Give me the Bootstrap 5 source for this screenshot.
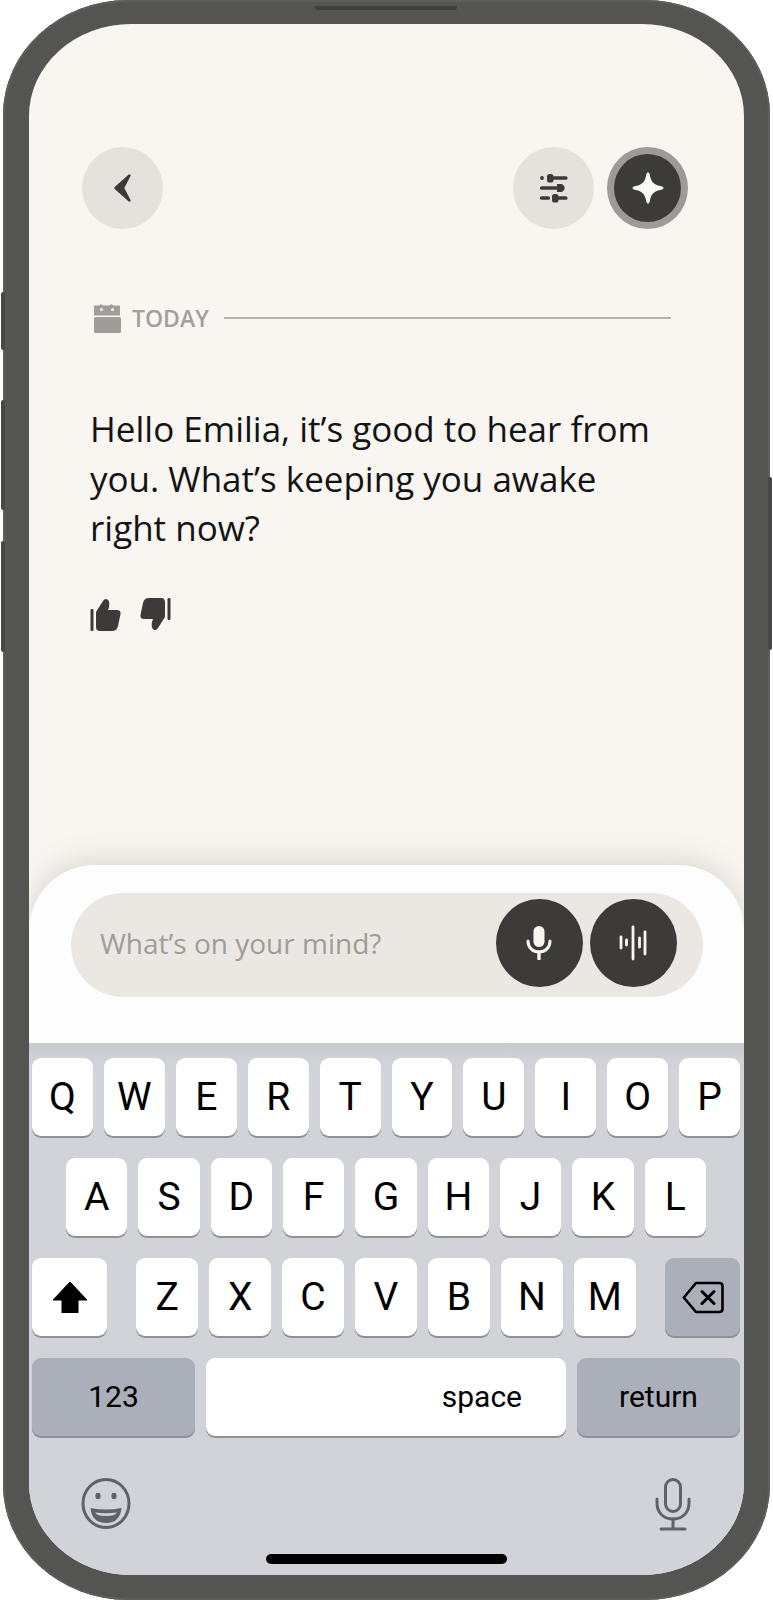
<!DOCTYPE html>
<html lang="en">
<head>
  <meta charset="UTF-8" />
  <meta name="viewport" content="width=device-width, initial-scale=1.0"/>
  <title>Chat</title>
  <link href="https://cdn.jsdelivr.net/npm/bootstrap@5.3.3/dist/css/bootstrap.min.css" rel="stylesheet">
  <style>
    body {
      margin: 0;
      background: #fff;
      font-family: "Open Sans", "Liberation Sans", sans-serif;
    }

    /* device shell */
    .phone-shell {
      position: relative;
      width: 767px;
      height: 1600px;
      margin-left: 3px;
      padding: 24px 26px 25px 26px;
      background: #545452;
      border-radius: 125px / 115px;
      box-shadow: inset 0 0 0 2px #5d5d5b;
    }
    .shell-notch {
      position: absolute;
      top: 6px;
      left: 312px;
      width: 142px;
      height: 4px;
      background: #3f3f3e;
      border-radius: 0 0 3px 3px;
    }
    .side-key {
      position: absolute;
      width: 4px;
      background: #474745;
      border-radius: 2px;
    }
    .side-key-a { left: -2px; top: 292px; height: 58px; }
    .side-key-b { left: -2px; top: 400px; height: 110px; }
    .side-key-c { left: -2px; top: 541px; height: 111px; }
    .side-key-d { right: -2px; top: 477px; height: 173px; }

    .phone-screen {
      height: 100%;
      background: #f9f6f1;
      border-radius: 102px / 92px;
      overflow: hidden;
    }

    /* conversation area */
    .chat-pane {
      height: 841px;
      padding: 123px 56px 0 53px;
      flex: none;
    }
    .round-btn {
      width: 81px;
      height: 82px;
      padding: 0;
      border: 0;
      background: #e5e2dd;
    }
    .round-btn-dark {
      background: #3d3a3a;
      border: 7px solid #9e9a97;
      background-clip: border-box;
    }
    .top-gap { gap: 13px; }
    .today-row {
      margin: 74px 17px 0 11px;
      gap: 11px;
    }
    .today-label {
      color: #a3a09c;
      font-size: 23px;
      font-weight: 600;
      line-height: 30px;
      font-family: "Open Sans", sans-serif;
    }
    .today-rule {
      height: 2px;
      margin-left: 4px;
      background: #b5b0ac;
    }
    .chat-message {
      margin: 71px 0 0 8px;
      font-size: 35px;
      line-height: 49.5px;
      color: #141414;
    }
    .rate-row {
      margin: 45px 0 0 8px;
      gap: 19px;
    }

    /* input sheet */
    .input-sheet {
      height: 178px;
      padding: 28px 41.5px 0 42px;
      background: #fdfdfd;
      border-radius: 66px 66px 0 0;
      box-shadow: 0 -6px 28px rgba(110, 100, 90, .2);
      position: relative;
      flex: none;
    }
    .input-pill {
      height: 104px;
      padding: 0 26px 0 29px;
      background: #ebe8e3;
      border-radius: 52px;
      gap: 7px;
    }
    .input-hint {
      color: #a09c99;
      font-size: 28px;
    }
    .pill-btn {
      width: 87px;
      height: 88px;
      padding: 0;
      border: 0;
      background: #3d3a3a;
    }

    /* keyboard */
    .kb-pane {
      position: relative;
      padding: 15px 4px 0 3px;
      background: linear-gradient(#c6c8cf, #d1d3d9 18px);
      font-family: "Roboto", "Liberation Sans", sans-serif;
      color: #000;
    }
    .kb-row {
      gap: 11px;
      height: 78px;
      margin-bottom: 22px;
    }
    .kb-row-mid { padding: 0 34px; }
    .kb-key {
      flex: 1 1 0;
      height: 78px;
      background: #fff;
      border-radius: 9px;
      box-shadow: 0 2px 0 #8f9199;
      font-size: 39px;
      line-height: 1;
    }
    .kb-key-fn { background: #abafba; }
    .kb-key-wide {
      flex: none;
      width: 75px;
    }
    .kb-key-word {
      font-size: 30px;
    }
    .kb-key-alt { flex: none; width: 163px; }
    .kb-space {
      padding-right: 44px;
    }
    .kb-letters {
      flex: 1 1 0;
      gap: 10.5px;
      margin: 0 18px;
    }
    .kb-extras {
      padding: 20px 49px 0 49px;
    }
    .kb-home {
      width: 241px;
      height: 10px;
      margin: 23px auto 0;
      background: #000;
      border-radius: 5px;
    }
  </style>
</head>
<body>

  <div class="phone-shell">
    <div class="shell-notch"></div>
    <div class="side-key side-key-a"></div>
    <div class="side-key side-key-b"></div>
    <div class="side-key side-key-c"></div>
    <div class="side-key side-key-d"></div>

    <div class="phone-screen d-flex flex-column">

      <div class="chat-pane">
        <div class="d-flex justify-content-between">
          <button class="btn round-btn rounded-circle d-flex align-items-center justify-content-center" aria-label="Back">
            <svg width="20" height="28" viewBox="0 0 20 28"><path d="M16.5 1.5 L2.5 14 L16.5 26.5 L10 14 Z" fill="#3d3a3a" stroke="#3d3a3a" stroke-width="2.4" stroke-linejoin="round"/></svg>
          </button>
          <div class="d-flex top-gap">
            <button class="btn round-btn rounded-circle d-flex align-items-center justify-content-center" aria-label="Filters">
              <svg width="28" height="30" viewBox="0 0 28 30" fill="#3d3a3a">
                <circle cx="2" cy="5" r="1.9"/>
                <rect x="7" y="1" width="6.5" height="8.5" rx="2.6"/>
                <rect x="12" y="3.2" width="15.5" height="3.6" rx="1.6"/>
                <rect x="0" y="13.2" width="18" height="3.6" rx="1.6"/>
                <path d="M17 11 h5 q5.5 4 0 8 h-5 z"/>
                <rect x="0" y="23.2" width="10" height="3.6" rx="1.6"/>
                <rect x="12" y="21" width="6.5" height="8.5" rx="2.6"/>
                <rect x="17" y="23.2" width="10.5" height="3.6" rx="1.6"/>
              </svg>
            </button>
            <button class="btn round-btn round-btn-dark rounded-circle d-flex align-items-center justify-content-center" aria-label="Assistant">
              <svg width="32" height="32" viewBox="0 0 32 32"><path d="M16 0.5 C17.3 0.5 17.6 2 18 4 C19.3 10 22 12.7 28 14 C30 14.4 31.5 14.7 31.5 16 C31.5 17.3 30 17.6 28 18 C22 19.3 19.3 22 18 28 C17.6 30 17.3 31.5 16 31.5 C14.7 31.5 14.4 30 14 28 C12.7 22 10 19.3 4 18 C2 17.6 0.5 17.3 0.5 16 C0.5 14.7 2 14.4 4 14 C10 12.7 12.7 10 14 4 C14.4 2 14.7 0.5 16 0.5 Z" fill="#fbf9f5"/></svg>
            </button>
          </div>
        </div>

        <div class="today-row d-flex align-items-center">
          <svg width="28" height="30" viewBox="0 0 28 30" fill="#a09c99">
            <path d="M1 3.5 q0-1 1-1 h4.5 q1-2.5 3.5 0 h6.5 q2.5-2.5 3.5 0 h6 q1 0 1 1 v9 h-26 z"/>
            <rect x="1" y="14" width="27" height="16" rx="1.5"/>
            <circle cx="8.5" cy="6.5" r="1.5" fill="#f9f6f1"/>
            <circle cx="19.5" cy="6.5" r="1.5" fill="#f9f6f1"/>
          </svg>
          <span class="today-label">TODAY</span>
          <div class="today-rule flex-grow-1"></div>
        </div>

        <p class="chat-message">Hello Emilia, it’s good to hear from<br>you. What’s keeping you awake<br>right now?</p>

        <div class="rate-row d-flex">
          <svg width="31" height="33" viewBox="0 0 31 33" fill="#3d3a3a">
            <rect x="0.5" y="11" width="3" height="22" rx="1.2"/>
            <path d="M6 14 L13 3 Q15 0 17.5 1.5 Q20 3 19 9 L18 12 H27 Q31 12 30.5 16 L28 28 Q27 33 22 33 H10 Q6 33 6 29 Z"/>
          </svg>
          <svg width="31" height="33" viewBox="0 0 31 33" fill="#3d3a3a">
            <g transform="rotate(180 15.5 16.5)">
              <rect x="0.5" y="11" width="3" height="22" rx="1.2"/>
              <path d="M6 14 L13 3 Q15 0 17.5 1.5 Q20 3 19 9 L18 12 H27 Q31 12 30.5 16 L28 28 Q27 33 22 33 H10 Q6 33 6 29 Z"/>
            </g>
          </svg>
        </div>
      </div>

      <div class="input-sheet">
        <div class="input-pill d-flex align-items-center">
          <span class="input-hint flex-grow-1 mb-1">What’s on your mind?</span>
          <button class="btn pill-btn rounded-circle d-flex align-items-center justify-content-center mb-1" aria-label="Dictate">
            <svg width="26" height="34" viewBox="0 0 26 34" fill="none">
              <rect x="7.5" y="0" width="11" height="21" rx="5.5" fill="#f9f6f1"/>
              <path d="M2 15 C2 22 7 26 13 26 C19 26 24 22 24 15" stroke="#f9f6f1" stroke-width="3" stroke-linecap="round"/>
              <path d="M13 26 V33" stroke="#f9f6f1" stroke-width="3.4" stroke-linecap="round"/>
            </svg>
          </button>
          <button class="btn pill-btn rounded-circle d-flex align-items-center justify-content-center mb-1" aria-label="Voice">
            <svg width="28" height="36" viewBox="0 0 28 36" fill="none" stroke="#f9f6f1" stroke-width="2.8" stroke-linecap="round">
              <path d="M2 12 V23"/>
              <path d="M7.5 15 V20"/>
              <path d="M14 2 V34"/>
              <path d="M20.5 13 V22"/>
              <path d="M26 7 V29"/>
            </svg>
          </button>
        </div>
      </div>

      <div class="kb-pane flex-grow-1">
        <div class="kb-row d-flex">
          <div class="kb-key d-flex align-items-center justify-content-center">Q</div>
          <div class="kb-key d-flex align-items-center justify-content-center">W</div>
          <div class="kb-key d-flex align-items-center justify-content-center">E</div>
          <div class="kb-key d-flex align-items-center justify-content-center">R</div>
          <div class="kb-key d-flex align-items-center justify-content-center">T</div>
          <div class="kb-key d-flex align-items-center justify-content-center">Y</div>
          <div class="kb-key d-flex align-items-center justify-content-center">U</div>
          <div class="kb-key d-flex align-items-center justify-content-center">I</div>
          <div class="kb-key d-flex align-items-center justify-content-center">O</div>
          <div class="kb-key d-flex align-items-center justify-content-center">P</div>
        </div>
        <div class="kb-row kb-row-mid d-flex">
          <div class="kb-key d-flex align-items-center justify-content-center">A</div>
          <div class="kb-key d-flex align-items-center justify-content-center">S</div>
          <div class="kb-key d-flex align-items-center justify-content-center">D</div>
          <div class="kb-key d-flex align-items-center justify-content-center">F</div>
          <div class="kb-key d-flex align-items-center justify-content-center">G</div>
          <div class="kb-key d-flex align-items-center justify-content-center">H</div>
          <div class="kb-key d-flex align-items-center justify-content-center">J</div>
          <div class="kb-key d-flex align-items-center justify-content-center">K</div>
          <div class="kb-key d-flex align-items-center justify-content-center">L</div>
        </div>
        <div class="kb-row d-flex">
          <div class="kb-key kb-key-wide d-flex align-items-center justify-content-center" aria-label="Shift">
            <svg width="36" height="31" viewBox="0 0 36 31"><path d="M18 0 L35 18 H26 V31 H10 V18 H1 Z" fill="#000" stroke="#000" stroke-linejoin="round"/></svg>
          </div>
          <div class="kb-letters d-flex">
            <div class="kb-key d-flex align-items-center justify-content-center">Z</div>
            <div class="kb-key d-flex align-items-center justify-content-center">X</div>
            <div class="kb-key d-flex align-items-center justify-content-center">C</div>
            <div class="kb-key d-flex align-items-center justify-content-center">V</div>
            <div class="kb-key d-flex align-items-center justify-content-center">B</div>
            <div class="kb-key d-flex align-items-center justify-content-center">N</div>
            <div class="kb-key d-flex align-items-center justify-content-center">M</div>
          </div>
          <div class="kb-key kb-key-fn kb-key-wide d-flex align-items-center justify-content-center" aria-label="Delete">
            <svg width="42" height="33" viewBox="0 0 42 33" fill="none" stroke="#000" stroke-width="2.6" stroke-linejoin="round" stroke-linecap="round">
              <path d="M14 2 H37 Q40.5 2 40.5 5 V28 Q40.5 31 37 31 H14 L1.8 16.5 Z"/>
              <path d="M20 10.5 L32 22.5 M32 10.5 L20 22.5" stroke-width="3"/>
            </svg>
          </div>
        </div>
        <div class="kb-row d-flex">
          <div class="kb-key kb-key-fn kb-key-word kb-key-alt d-flex align-items-center justify-content-center">123</div>
          <div class="kb-key kb-key-word kb-space d-flex align-items-center justify-content-end">space</div>
          <div class="kb-key kb-key-fn kb-key-word kb-key-alt d-flex align-items-center justify-content-center">return</div>
        </div>

        <div class="kb-extras d-flex justify-content-between align-items-start">
          <svg width="50" height="51" viewBox="0 0 50 51" fill="none" stroke="#5f6369" stroke-width="3">
            <ellipse cx="25" cy="25.5" rx="23" ry="24"/>
            <ellipse cx="17" cy="18" rx="2.6" ry="3.2" fill="#5f6369" stroke="none"/>
            <ellipse cx="33" cy="18" rx="2.6" ry="3.2" fill="#5f6369" stroke="none"/>
            <path d="M9.5 30 Q25 33 40.5 30 Q39 45 25 45 Q11 45 9.5 30 Z" fill="#5f6369" stroke="none"/>
            <path d="M14 34.5 Q25 36 36 34.5 Q34 38 25 38 Q16 38 14 34.5 Z" fill="#d1d3d9" stroke="none"/>
          </svg>
          <svg width="36" height="53" viewBox="0 0 36 53" fill="none" stroke="#5f6369" stroke-width="3" stroke-linecap="round">
            <rect x="10.5" y="1.5" width="15" height="32" rx="7.5"/>
            <path d="M2 21 V25 C2 35 9 41 18 41 C27 41 34 35 34 25 V21"/>
            <path d="M18 41 V50"/>
            <path d="M6 51 H30"/>
          </svg>
        </div>
        <div class="kb-home"></div>
      </div>

    </div>
  </div>

  <script src="https://cdn.jsdelivr.net/npm/bootstrap@5.3.3/dist/js/bootstrap.bundle.min.js"></script>
</body>
</html>
